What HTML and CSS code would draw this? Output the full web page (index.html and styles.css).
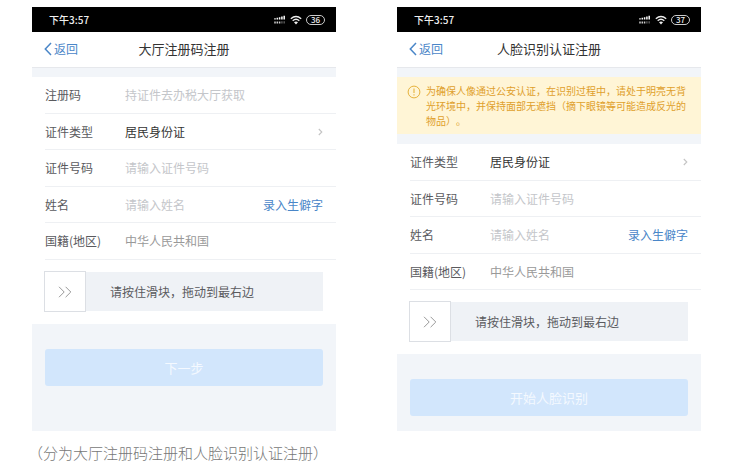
FILE: index.html
```html
<!DOCTYPE html>
<html lang="zh-CN">
<head>
  <meta charset="UTF-8" />
  <meta name="viewport" content="width=device-width, initial-scale=1.0"/>
  <title>注册</title>
  <link rel="stylesheet" href="styles.css">
</head>
<body>
  <!-- shared icons -->
  <svg class="defs" width="0" height="0" aria-hidden="true">
    <symbol id="signal" viewBox="0 0 12 10">
      <path d="M1 3.2v1.4M3.3 2.8v1.8M5.6 2.2v2.4M7.9 1.4v3.2M10.2 .8v3.8" stroke="#fff" stroke-width="1.5"/>
      <path d="M1 6.6v2M3.3 6.6v2M5.6 6.6v2" stroke="#ccc" stroke-width="1.5"/>
      <path d="M7.9 6.2v2.4M10.2 6.2v2.4" stroke="#555" stroke-width="1.5"/>
    </symbol>
    <symbol id="wifi" viewBox="0 0 12 10">
      <path d="M.8 3.8Q6 -.8 11.2 3.8M2.7 5.8Q6 2.8 9.3 5.8" fill="none" stroke="#eee" stroke-width="1.3"/>
      <path d="M4 7.3Q6 5.7 8 7.3L6 9.6z" fill="#eee"/>
    </symbol>
    <symbol id="back" viewBox="0 0 8 14">
      <path d="M7 1L1.3 7L7 13" fill="none" stroke="#4a86c8" stroke-width="1.5"/>
    </symbol>
    <symbol id="arrow" viewBox="0 0 5 8">
      <path d="M.8 1L3.8 4L.8 7" fill="none" stroke="#c4c4c4" stroke-width="1.1"/>
    </symbol>
    <symbol id="double" viewBox="0 0 14 12">
      <path d="M1 .8L6.2 6L1 11.2M7.6 .8L12.8 6L7.6 11.2" fill="none" stroke="#999" stroke-width="1"/>
    </symbol>
  </svg>

  <main class="screens">
    <div class="column">
      <section class="phone">
        <div class="status">
          <span>下午3:57</span>
          <span class="status-icons">
            <svg width="12" height="10"><use href="#signal"/></svg>
            <svg width="12" height="10"><use href="#wifi"/></svg>
            <span class="battery">36</span>
          </span>
        </div>
        <header class="nav">
          <a class="back" href="#"><svg width="8" height="14"><use href="#back"/></svg>返回</a>
          <h1>大厅注册码注册</h1>
        </header>
        <form>
          <div class="panel">
            <div class="row">
              <label for="code">注册码</label>
              <input type="text" id="code" placeholder="持证件去办税大厅获取">
            </div>
            <div class="row">
              <label for="type1">证件类型</label>
              <select id="type1"><option>居民身份证</option></select>
              <svg width="5" height="8"><use href="#arrow"/></svg>
            </div>
            <div class="row">
              <label for="number1">证件号码</label>
              <input type="text" id="number1" placeholder="请输入证件号码">
            </div>
            <div class="row">
              <label for="name1">姓名</label>
              <input type="text" id="name1" placeholder="请输入姓名">
              <a class="rare" href="#">录入生僻字</a>
            </div>
            <div class="row">
              <label for="country1">国籍(地区)</label>
              <input type="text" id="country1" value="中华人民共和国" readonly>
            </div>
          </div>
          <div class="verify">
            <div class="slider">
              <label for="slide1">请按住滑块，拖动到最右边</label>
              <input type="range" id="slide1" min="0" max="100" value="0">
              <svg width="14" height="12"><use href="#double"/></svg>
            </div>
          </div>
          <button class="submit" type="button">下一步</button>
        </form>
      </section>
      <p class="caption">（分为大厅注册码注册和人脸识别认证注册）</p>
    </div>

    <div class="column">
      <section class="phone">
        <div class="status">
          <span>下午3:57</span>
          <span class="status-icons">
            <svg width="12" height="10"><use href="#signal"/></svg>
            <svg width="12" height="10"><use href="#wifi"/></svg>
            <span class="battery">37</span>
          </span>
        </div>
        <header class="nav">
          <a class="back" href="#"><svg width="8" height="14"><use href="#back"/></svg>返回</a>
          <h1>人脸识别认证注册</h1>
        </header>
        <div class="notice">
          <svg width="14" height="14" viewBox="0 0 14 14">
            <circle cx="7" cy="7" r="5.9" fill="none" stroke="#e6b23c" stroke-width="1"/>
            <path d="M7 3.5v4.6M7 9.3v1.2" stroke="#e6b23c" stroke-width="1.1"/>
          </svg>
          <p>为确保人像通过公安认证，在识别过程中，请处于明亮无背光环境中，并保持面部无遮挡（摘下眼镜等可能造成反光的物品）。</p>
        </div>
        <form>
          <div class="panel">
            <div class="row">
              <label for="type2">证件类型</label>
              <select id="type2"><option>居民身份证</option></select>
              <svg width="5" height="8"><use href="#arrow"/></svg>
            </div>
            <div class="row">
              <label for="number2">证件号码</label>
              <input type="text" id="number2" placeholder="请输入证件号码">
            </div>
            <div class="row">
              <label for="name2">姓名</label>
              <input type="text" id="name2" placeholder="请输入姓名">
              <a class="rare" href="#">录入生僻字</a>
            </div>
            <div class="row">
              <label for="country2">国籍(地区)</label>
              <input type="text" id="country2" value="中华人民共和国" readonly>
            </div>
          </div>
          <div class="verify">
            <div class="slider">
              <label for="slide2">请按住滑块，拖动到最右边</label>
              <input type="range" id="slide2" min="0" max="100" value="0">
              <svg width="14" height="12"><use href="#double"/></svg>
            </div>
          </div>
          <button class="submit" type="button">开始人脸识别</button>
        </form>
      </section>
    </div>
  </main>
</body>
</html>
```

FILE: styles.css
```css
* {
  box-sizing: border-box;
}

body {
  margin: 0;
  background: #fff;
  color: #5a5a5e;
  font-family: "Noto Sans CJK SC", sans-serif;
  font-size: 12px;
  line-height: 18px;
  text-spacing-trim: space-all;
}

a {
  color: #4a86c8;
  text-decoration: none;
}

.defs {
  position: absolute;
}

.screens {
  display: grid;
  grid-template-columns: 1fr 1fr;
  gap: 61px;
  padding: 7px 38px 0 32px;
}

.column {
  display: flex;
  flex-direction: column;
}

.phone {
  background: #f2f5f9;
  padding-bottom: 15px;
}

.column:first-child .phone {
  padding-bottom: 45px;
}

/* status bar */
.status {
  display: flex;
  justify-content: space-between;
  align-items: center;
  height: 25px;
  padding: 0 11px 0 17px;
  background: #000;
  color: #eee;
  font-size: 10px;
  font-weight: 500;
}

.status-icons {
  display: flex;
  align-items: center;
  gap: 4px;
}

.battery {
  width: 19px;
  height: 10px;
  border: 1px solid #ccc;
  border-radius: 5px;
  font-size: 8px;
  line-height: 8px;
  text-align: center;
}

/* title bar */
.nav {
  display: grid;
  grid-template-columns: 1fr auto 1fr;
  align-items: center;
  height: 36px;
  padding: 0 12px 2px;
  background: #fff;
  border-bottom: 1px solid #e6e8ec;
}

.back {
  display: flex;
  align-items: center;
  gap: 2px;
}

.nav h1 {
  margin: 0;
  color: #333;
  font-size: 13px;
  font-weight: 400;
}

.notice {
  display: flex;
  gap: 5px;
  margin-top: 9px;
  padding: 6px 10px;
  background: #fff5d6;
  color: #e0a02c;
  font-size: 10px;
  line-height: 15px;
}

.notice svg {
  flex: none;
  margin-top: 2px;
}

.notice p {
  margin: 0;
}

/* form rows */
.panel {
  margin-top: 9px;
  padding-left: 13px;
  background: #fff;
}

.notice + form .panel {
  margin-top: 10px;
}

.row {
  display: flex;
  align-items: center;
  height: 37px;
  padding-right: 13px;
  border-bottom: 1px solid #eef0f3;
}

.row:nth-child(even) {
  height: 36px;
}

.row label {
  flex: none;
  width: 80px;
}

.row input,
.row select {
  flex: 1;
  min-width: 0;
  padding: 0;
  border: none;
  background: none;
  color: #999;
  font: inherit;
  appearance: none;
  outline: none;
}

.row select {
  color: #333;
}

.row input::placeholder {
  color: #c4c6ca;
}

/* drag to verify */
.verify {
  padding: 12px 13px 13px;
  background: #fff;
}

.slider {
  position: relative;
  display: flex;
  align-items: center;
  height: 39px;
  padding-left: 65px;
  background: #eff2f6;
}

.slider input {
  position: absolute;
  top: -1px;
  left: -1px;
  width: 100%;
  height: 41px;
  margin: 0;
  background: none;
  appearance: none;
}

.slider input::-webkit-slider-thumb {
  width: 42px;
  height: 41px;
  border: 1px solid #dcdfe4;
  background: #fff;
  appearance: none;
}

.slider svg {
  position: absolute;
  top: 14px;
  left: 13px;
  pointer-events: none;
}

.submit {
  display: block;
  width: calc(100% - 26px);
  height: 37px;
  margin: 25px 13px 0;
  padding: 0;
  border: none;
  border-radius: 3px;
  background: #d2e6fc;
  color: #f4f9ff;
  font: inherit;
  font-size: 13px;
}

.caption {
  margin: 12px 0 0 -4px;
  color: #777;
  font-size: 15px;
  font-weight: 300;
  line-height: 20px;
  white-space: nowrap;
}
```
